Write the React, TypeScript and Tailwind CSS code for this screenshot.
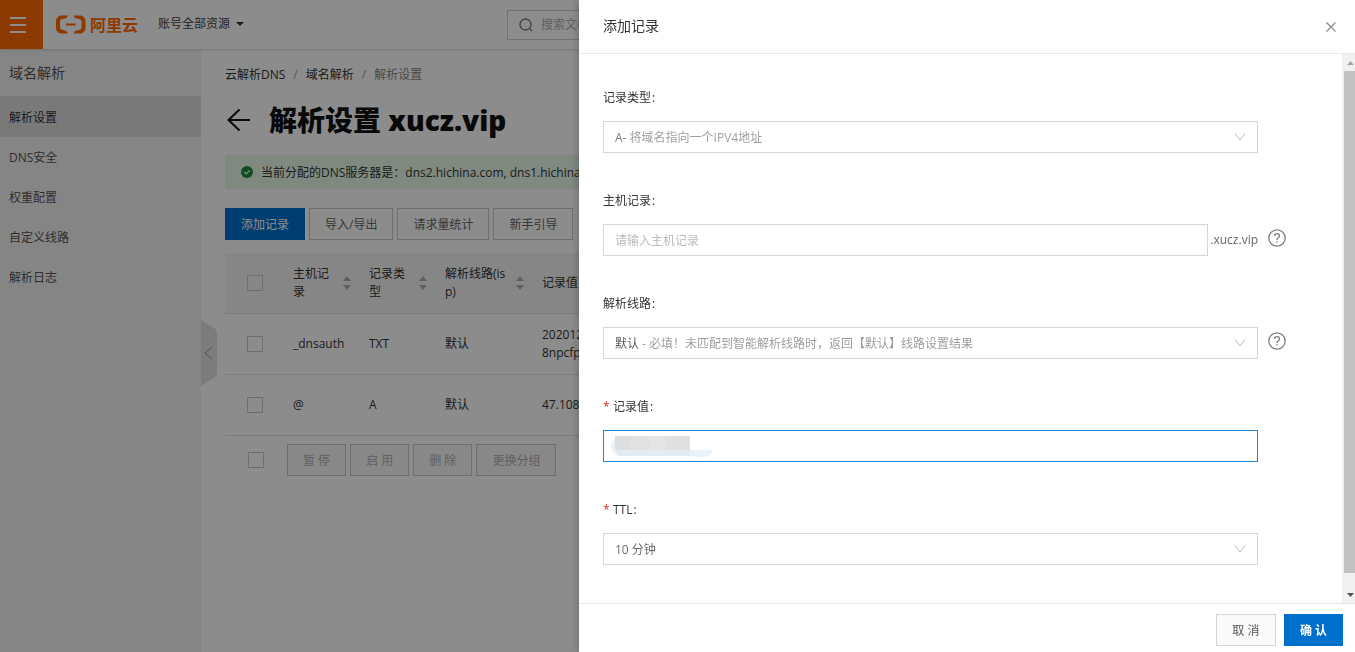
import type { ReactNode } from "react";

const sideItems = ["DNS安全", "权重配置", "自定义线路", "解析日志"];

const records = [
  { host: "_dnsauth", type: "TXT", line: "默认", value: ["202012", "8npcfp"] },
  { host: "@", type: "A", line: "默认", value: ["47.108."] },
];

function LogoMark() {
  return (
    <svg width="30" height="19" viewBox="0 0 30 19" fill="none" aria-hidden="true">
      <path
        d="M12 .5H5.500C2.500.5 0 3 0 6v7c0 3 2.500 5.500 5.500 5.500H12l-1.500-2.500-4.800-1.300A2.200 2.200 0 0 1 4 12.600V6.400c0-1 .7-1.900 1.700-2.100L10.500 3 12 .5Z"
        fill="#ff6a00"
      />
      <path
        d="M17.500.5H24c3 0 5.500 2.500 5.500 5.500v7c0 3-2.500 5.500-5.500 5.500h-6.500L19 16l4.800-1.300a2.200 2.200 0 0 0 1.700-2.100V6.400c0-1-.7-1.900-1.700-2.100L19 3 17.500.5Z"
        fill="#ff6a00"
      />
      <path d="M10 8.500h9.500v2H10z" fill="#ff6a00" />
    </svg>
  );
}

function Sorter() {
  return (
    <svg width="8" height="14" viewBox="0 0 8 14" fill="#b0b0b0" className="mr-[2px] shrink-0" aria-hidden="true">
      <path d="M4 0l4 5H0zM4 14l4-5H0z" />
    </svg>
  );
}

function HelpIcon() {
  return (
    <svg width="18" height="18" viewBox="0 0 18 18" fill="none" stroke="#808080" className="mb-1 shrink-0" aria-hidden="true">
      <circle cx="9" cy="9" r="8.200" strokeWidth="1.300" />
      <path d="M6.500 7.100c0-1.500 1-2.500 2.500-2.500s2.500 1 2.500 2.300c0 1.900-2.500 1.900-2.500 4" strokeWidth="1.300" />
      <path d="M9 12.200v1.400" strokeWidth="1.400" />
    </svg>
  );
}

function Check({ label }: { label: string }) {
  return <input type="checkbox" aria-label={label} className="block size-4 shrink-0 appearance-none border border-[#c8c8c8]" />;
}

function HeadCell({ children }: { children: ReactNode }) {
  return (
    <th className="px-2 font-normal">
      <div className="flex items-center justify-between gap-1">
        <span className="break-all">{children}</span>
        <Sorter />
      </div>
    </th>
  );
}

function Button({ children, disabled }: { children: ReactNode; disabled?: boolean }) {
  return (
    <button
      disabled={disabled}
      className="h-8 border border-[#c8c8c8] px-[15px] pt-[2px] whitespace-nowrap text-[#666] disabled:bg-[#f7f7f7] disabled:text-[#b0b0b0]"
    >
      {children}
    </button>
  );
}

function Field({ id, label, required, help, children }: { id: string; label: string; required?: boolean; help?: boolean; children: ReactNode }) {
  return (
    <div className="mb-[37px]">
      <label htmlFor={id} className="mb-[14px] flex h-5 items-center pt-[2px] text-[#333]">
        {required && <span className="mr-1 w-[6px] text-[#d93026]">*</span>}
        {label}
        <span className="ml-px">:</span>
      </label>
      <div className="flex items-center">
        <div className="flex min-w-0 flex-1 items-center">{children}</div>
        <div className="w-[84px] pl-[10px]">{help && <HelpIcon />}</div>
      </div>
    </div>
  );
}

function Select({ id, text, tone }: { id: string; text: string; tone: string }) {
  return (
    <div className="relative h-8 w-full border border-[#d5d5d5]">
      <select id={id} className={`block h-full w-full appearance-none bg-clip-text px-[11px] pt-[2px] text-transparent outline-none ${tone}`}>
        <option>{text}</option>
      </select>
      <svg width="12" height="8" viewBox="0 0 12 8" fill="none" stroke="#bbb" className="pointer-events-none absolute top-[11px] right-[11px]" aria-hidden="true">
        <path d="M1 .5l5 6.500 5-6.500" />
      </svg>
    </div>
  );
}

function TopBar() {
  return (
    <header className="relative z-10 flex h-[49px] items-center bg-white shadow-[0_1px_3px_rgba(0,0,0,0.15)]">
      <button aria-label="菜单" className="flex h-full w-[43px] shrink-0 items-center justify-center bg-[#ff6a00] pr-2">
        <svg width="16" height="16" viewBox="0 0 16 16" fill="#fff" aria-hidden="true">
          <path d="M0 0h16v2H0zM0 7h16v2H0zM0 14h16v2H0z" />
        </svg>
      </button>
      <a href="#" className="ml-[13px] flex shrink-0 items-center gap-1 text-base font-bold text-[#ff6a00]">
        <LogoMark />
        阿里云
      </a>
      <button className="ml-5 flex shrink-0 items-center gap-[6px] pb-[2px] text-[#444]">
        账号全部资源
        <svg width="8" height="4" viewBox="0 0 8 4" fill="#333" aria-hidden="true">
          <path d="M0 0h8L4 4z" />
        </svg>
      </button>
      <label className="ml-[263px] flex h-[30px] w-[300px] shrink-0 items-center gap-2 border border-[#d0d0d0] px-[11px]">
        <svg width="14" height="14" viewBox="0 0 14 14" fill="none" stroke="#777" strokeWidth="1.300" aria-hidden="true">
          <circle cx="6.500" cy="6.500" r="5.500" />
          <path d="M10.500 10.500l2.500 2.500" />
        </svg>
        <input placeholder="搜索文档" aria-label="搜索文档" className="min-w-0 flex-1 outline-none placeholder:text-[#b0b0b0]" />
      </label>
    </header>
  );
}

function Sidebar() {
  return (
    <nav className="relative w-[201px] shrink-0 bg-[#f3f3f3] text-[#555]">
      <h2 className="flex h-[47px] items-center px-[9px] text-sm">域名解析</h2>
      <a href="#" className="flex h-[41px] items-center bg-[#dcdcdc] px-[9px] pt-[2px] text-[#333]">
        解析设置
      </a>
      {sideItems.map((item) => (
        <a key={item} href="#" className="flex h-10 items-center px-[9px] pt-[2px]">
          {item}
        </a>
      ))}
      <button aria-label="收起" className="absolute top-[271px] left-full">
        <svg width="16" height="66" viewBox="0 0 16 66" fill="none" aria-hidden="true">
          <path d="M0 0l13 8q3 2 3 5v40q0 3-3 5L0 66z" fill="#e2e2e2" />
          <path d="M11 27l-7 6 7 6" stroke="#999" />
        </svg>
      </button>
    </nav>
  );
}

function RecordsPage() {
  return (
    <main className="min-w-0 flex-1 overflow-hidden px-6 pt-[15px]">
      <nav className="flex h-5 items-center gap-2 pt-[2px] text-[#333]">
        <a href="#">云解析DNS</a>
        <span className="text-[#999]">/</span>
        <a href="#">域名解析</a>
        <span className="text-[#999]">/</span>
        <span className="text-[#888]">解析设置</span>
      </nav>
      <div className="mt-4 flex h-10 items-center gap-[18px]">
        <button aria-label="返回">
          <svg width="26" height="24" viewBox="0 0 26 24" fill="none" stroke="#111" strokeWidth="2" aria-hidden="true">
            <path d="M25 12H3M14.500 1.500L3.500 12l11 10.500" />
          </svg>
        </button>
        <h1 className="pt-[2px] text-[28px] font-extrabold whitespace-nowrap text-[#111]">解析设置 xucz.vip</h1>
      </div>
      <div className="mt-[15px] flex h-[34px] items-center gap-2 bg-[#e7faea] px-4 whitespace-nowrap text-[#333]">
        <svg width="12" height="12" viewBox="0 0 12 12" className="shrink-0" aria-hidden="true">
          <circle cx="6" cy="6" r="6" fill="#1e8e3e" />
          <path d="M3.300 6l2 2 3.400-3.600" fill="none" stroke="#fff" strokeWidth="1.100" />
        </svg>
        <span className="pt-[2px]">当前分配的DNS服务器是：dns2.hichina.com, dns1.hichina.com</span>
      </div>
      <div className="mt-[19px] flex gap-1">
        <button className="h-8 bg-[#0070cc] px-4 pt-[2px] text-white">添加记录</button>
        <Button>导入/导出</Button>
        <Button>请求量统计</Button>
        <Button>新手引导</Button>
      </div>
      <table className="mt-[13px] w-full table-fixed border-separate border-spacing-0 text-left leading-[18px] text-[#333]">
        <colgroup>
          <col className="w-[60px]" />
          <col className="w-[76px]" />
          <col className="w-[76px]" />
          <col className="w-[97px]" />
          <col />
        </colgroup>
        <thead className="bg-[#f5f5f5]">
          <tr className="h-[61px] [&>th]:border-b [&>th]:border-[#e3e3e3]">
            <th className="pl-[22px]">
              <Check label="全选" />
            </th>
            <HeadCell>主机记录</HeadCell>
            <HeadCell>记录类型</HeadCell>
            <HeadCell>解析线路(isp)</HeadCell>
            <th className="px-2 font-normal">记录值</th>
          </tr>
        </thead>
        <tbody>
          {records.map((r) => (
            <tr key={r.host} className="h-[61px] [&>td]:border-b [&>td]:border-[#e3e3e3]">
              <td className="pl-[22px]">
                <Check label={r.host} />
              </td>
              <td className="px-2">{r.host}</td>
              <td className="px-2">{r.type}</td>
              <td className="px-2">{r.line}</td>
              <td className="px-2">
                {r.value.map((v) => (
                  <div key={v}>{v}</div>
                ))}
              </td>
            </tr>
          ))}
        </tbody>
      </table>
      <div className="mt-2 flex items-center gap-1 pl-[23px]">
        <div className="mr-[19px]">
          <Check label="选择全部记录" />
        </div>
        <Button disabled>暂 停</Button>
        <Button disabled>启 用</Button>
        <Button disabled>删 除</Button>
        <Button disabled>更换分组</Button>
      </div>
    </main>
  );
}

function Scrollbar() {
  return (
    <div className="flex w-[13px] shrink-0 flex-col bg-[#f1f1f1] pl-[2px]" aria-hidden="true">
      <div className="flex h-[17px] items-center justify-end pr-px">
        <svg width="7" height="4" viewBox="0 0 7 4" fill="#a3a3a3">
          <path d="M0 4h7L3.500 0z" />
        </svg>
      </div>
      <div className="flex-1 bg-[#c1c1c1]" />
      <div className="h-[13px]" />
      <div className="flex h-[17px] items-center justify-end pr-px">
        <svg width="7" height="4" viewBox="0 0 7 4" fill="#505050">
          <path d="M0 0h7L3.500 4z" />
        </svg>
      </div>
    </div>
  );
}

function AddRecordDrawer() {
  return (
    <section role="dialog" aria-label="添加记录" className="flex w-[776px] max-w-full flex-col bg-white shadow-[-2px_0_8px_rgba(0,0,0,0.2)]">
      <header className="flex h-[54px] shrink-0 items-center justify-between border-b border-[#e8e8e8] px-[19px]">
        <h2 className="pb-[2px] pl-[5px] text-sm text-[#333]">添加记录</h2>
        <button aria-label="关闭">
          <svg width="10" height="10" viewBox="0 0 10 10" stroke="#888" strokeWidth="1.200" aria-hidden="true">
            <path d="M.5.5l9 9M9.500.5l-9 9" />
          </svg>
        </button>
      </header>
      <div className="flex min-h-0 flex-1">
        <form className="min-w-0 flex-1 overflow-hidden pt-[33px] pl-6">
          <Field id="type" label="记录类型">
            <Select id="type" text="A- 将域名指向一个IPV4地址" tone="bg-[linear-gradient(90deg,#777_25px,#999_25px)]" />
          </Field>
          <Field id="host" label="主机记录" help>
            <input id="host" placeholder="请输入主机记录" className="h-8 min-w-0 flex-1 border border-[#d5d5d5] px-[11px] outline-none placeholder:text-[#bbb]" />
            <span className="w-[50px] text-right text-[#666]">.xucz.vip</span>
          </Field>
          <Field id="line" label="解析线路" help>
            <Select id="line" text="默认 - 必填！未匹配到智能解析线路时，返回【默认】线路设置结果" tone="bg-[linear-gradient(90deg,#555_36px,#999_36px)]" />
          </Field>
          <Field id="value" label="记录值" required>
            <div className="relative w-full">
              <input id="value" className="block h-8 w-full border border-[#1f84d6] px-[11px] outline-none" />
              <svg width="102" height="22" viewBox="0 0 102 22" className="pointer-events-none absolute top-[5px] left-2" aria-hidden="true">
                <path d="M9 2C3 2 0 6 0 11s4 10 10 10h72c3 1 6 1 10 1 5 0 9-2 10-7H79V2z" fill="#e9f3fc" />
                <path d="M4 1h15v14H4z" fill="#dedede" />
                <path d="M19 1h20v14H19z" fill="#e1e1e1" />
                <path d="M39 1h15v14H39z" fill="#e5e5e5" />
                <path d="M54 1h25v14H54z" fill="#e0e0e0" />
                <path d="M4 15h75v6H8z" fill="#e3ebf4" />
              </svg>
            </div>
          </Field>
          <Field id="ttl" label="TTL" required>
            <Select id="ttl" text="10 分钟" tone="bg-[linear-gradient(#666,#666)]" />
          </Field>
        </form>
        <Scrollbar />
      </div>
      <footer className="flex h-[49px] shrink-0 items-start justify-end gap-2 border-t border-[#e8e8e8] px-3 pt-[10px]">
        <button className="h-8 min-w-[60px] border border-[#d5d5d5] bg-[#fafafa] px-[15px] pt-[2px] text-[#555]">取 消</button>
        <button className="h-8 bg-[#0070cc] px-4 pt-[2px] font-bold text-white">确 认</button>
      </footer>
    </section>
  );
}

export default function App() {
  return (
    <div className="flex min-h-screen flex-col overflow-hidden bg-white font-['Open_Sans','Noto_Sans_CJK_SC',sans-serif] text-xs">
      <TopBar />
      <div className="flex flex-1">
        <Sidebar />
        <RecordsPage />
      </div>
      <div className="fixed inset-0 z-20 flex justify-end bg-black/45">
        <AddRecordDrawer />
      </div>
    </div>
  );
}
